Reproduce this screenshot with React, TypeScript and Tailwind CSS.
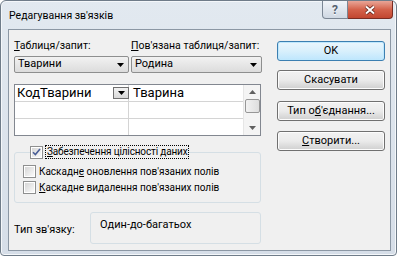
import React from 'react';

const font = "font-['Roboto','Noto_Sans',sans-serif]";

const Check: React.FC<{ checked?: boolean }> = ({ checked }) => (
  <span className="w-[13px] h-[13px] shrink-0 border border-[#8e8f8f] bg-white p-[1px] flex">
    <span className="flex-1 bg-linear-to-br from-[#d6d6d6] to-[#fafafa] flex items-center justify-center">
      {checked && (
        <svg width="9" height="8" viewBox="0 0 9 8">
          <path d="M1 4.2 L3.4 6.6 L8 1" fill="none" stroke="#4a5f97" strokeWidth="1.6" />
        </svg>
      )}
    </span>
  </span>
);

const Button: React.FC<{ children: React.ReactNode; primary?: boolean }> = ({ children, primary }) => (
  <div
    className={
      primary
        ? 'h-[20px] w-[108px] rounded-[3px] border border-[#3c7fb1] bg-linear-to-b from-[#eaf6fd] via-[#d9f0fc] to-[#bee6fd] shadow-[inset_0_0_0_1px_#bfe8fd] flex items-center justify-center text-[11px] text-black whitespace-nowrap'
        : 'h-[20px] w-[108px] rounded-[3px] border border-[#707070] bg-linear-to-b from-[#f2f2f2] via-[#ebebeb] to-[#cfcfcf] shadow-[inset_0_0_0_1px_#fcfcfc] flex items-center justify-center text-[11px] text-black whitespace-nowrap'
    }
  >
    {children}
  </div>
);

const Combo: React.FC<{ text: string; w: string }> = ({ text, w }) => (
  <div
    className={`${w} h-[17px] rounded-[2px] border border-[#8e8f8f] bg-linear-to-b from-[#f2f2f2] to-[#dcdcdc] flex items-center pl-[3px] pr-[4px] text-[11px]`}
  >
    <span className="flex-1">{text}</span>
    <svg width="7" height="4" viewBox="0 0 7 4">
      <path d="M0 0 H7 L3.5 4 Z" fill="#000" />
    </svg>
  </div>
);

export default function App() {
  return (
    <div className={`w-[400px] h-[259px] bg-white ${font} text-black`}>
      <div className="w-[397px] h-[256px] rounded-t-[6px] rounded-b-[4px] border border-[#6f7c89] bg-linear-to-b from-[#e2e9f0] to-[#d6dee8] flex flex-col pl-[7px] pr-[5px] pb-[4px] shadow-[inset_0_0_0_1px_#f4f7fa]">
        <div className="h-[28px] flex items-start justify-between shrink-0">
          <div className="pt-[7px] pl-[1px] text-[10.5px] text-black leading-[15px] whitespace-nowrap">Редагування зв'язків</div>
          <div className="flex mr-[-2px]">
            <div className="w-[26px] h-[18px] border border-t-0 border-[#7b8694] rounded-bl-[4px] bg-linear-to-b from-[#f1f4f8] to-[#cfd8e3] flex items-center justify-center text-[12px] font-bold text-[#566170] leading-none [text-shadow:0_1px_0_#fff]">
              ?
            </div>
            <div className="w-[45px] h-[18px] border border-t-0 border-l-0 border-[#7a2c22] rounded-br-[4px] bg-linear-to-b from-[#e8a597] via-[#d4624b] to-[#c24630] flex items-center justify-center">
              <svg width="12" height="10" viewBox="0 0 12 10">
                <path d="M2 1.5 L10 8.5 M10 1.5 L2 8.5" stroke="#5a2018" strokeWidth="3.6" />
                <path d="M2 1.5 L10 8.5 M10 1.5 L2 8.5" stroke="#fff" strokeWidth="2" />
              </svg>
            </div>
          </div>
        </div>

        <div className="flex-1 border border-[#8b97a4] bg-[#f0f0f0] flex pl-[5px]">
          <div className="w-[248px] flex flex-col">
            <div className="mt-[8px] h-[15px] flex text-[10.5px] leading-[15px] whitespace-nowrap">
              <span className="w-[117px]">
                <u>Т</u>аблиця/запит:
              </span>
              <span>
                <u>П</u>ов'язана таблиця/запит:
              </span>
            </div>
            <div className="mt-[3px] flex gap-[2px]">
              <Combo text="Тварини" w="w-[115px]" />
              <Combo text="Родина" w="w-[131px]" />
            </div>

            <div className="mt-[11px] w-[247px] h-[52px] border border-[#828790] bg-white flex">
              <div className="flex-1 flex flex-col">
                <div className="h-[17px] flex border-b border-[#d4d4d4] text-[13px] leading-[16px]">
                  <div className="w-[114px] border-r border-[#d4d4d4] flex items-center pl-[2px]">
                    <span className="flex-1">КодТварини</span>
                    <span className="w-[16px] h-[12px] mr-[-1px] border border-[#707070] bg-linear-to-b from-[#f2f2f2] to-[#d8d8d8] flex items-center justify-center">
                      <svg width="7" height="4" viewBox="0 0 7 4">
                        <path d="M0 0 H7 L3.5 4 Z" fill="#000" />
                      </svg>
                    </span>
                  </div>
                  <div className="flex-1 pl-[4px]">Тварина</div>
                </div>
                <div className="h-[17px] flex border-b border-[#d4d4d4]">
                  <div className="w-[114px] border-r border-[#d4d4d4]" />
                </div>
                <div className="flex-1 flex">
                  <div className="w-[114px] border-r border-[#d4d4d4]" />
                </div>
              </div>
              <div className="w-[17px] border-l border-[#e6e6e6] bg-[#f4f4f4] flex flex-col items-center">
                <div className="h-[14px] flex items-center justify-center">
                  <svg width="7" height="4" viewBox="0 0 7 4">
                    <path d="M0 4 H7 L3.5 0 Z" fill="#606060" />
                  </svg>
                </div>
                <div className="w-[15px] h-[14px] rounded-[2px] border border-[#979797] bg-linear-to-r from-[#f2f2f2] to-[#dedede]" />
                <div className="flex-1 flex items-end pb-[5px]">
                  <svg width="7" height="4" viewBox="0 0 7 4">
                    <path d="M0 0 H7 L3.5 4 Z" fill="#606060" />
                  </svg>
                </div>
              </div>
            </div>

            <fieldset className="mt-[9px] w-[247px] h-[58px] border border-[#d5dfe5] rounded-[3px] pl-[8px] text-[10px] leading-[15px] whitespace-nowrap">
              <legend className="ml-[7px] px-0 flex items-center gap-[2px]">
                <Check checked />
                <span className="border border-dotted border-black px-[1px] leading-[12px] tracking-[-0.15px]">
                  <u>З</u>абезпечення цілісності даних
                </span>
              </legend>
              <div className="mt-[5px] flex items-center gap-[3px]">
                <Check />
                <span>
                  Каскадн<u>е</u> оновлення пов'язаних полів
                </span>
              </div>
              <div className="mt-[1px] flex items-center gap-[3px]">
                <Check />
                <span>
                  <u>К</u>аскадне видалення пов'язаних полів
                </span>
              </div>
            </fieldset>

            <div className="mt-[9px] flex items-start text-[11px] whitespace-nowrap">
              <span className="w-[76px] mt-[10px] leading-[15px]">Тип зв'язку:</span>
              <div className="w-[171px] h-[32px] border border-[#d5dfe5] rounded-[3px] pl-[9px] pt-[4px] leading-[15px]">
                Один-до-багатьох
              </div>
            </div>
          </div>

          <div className="ml-[15px] flex flex-col pt-[11px]">
            <Button primary>OK</Button>
            <div className="mt-[9px]">
              <Button>Скасувати</Button>
            </div>
            <div className="mt-[11px]">
              <Button>
                Тип о<u>б</u>'єднання...
              </Button>
            </div>
            <div className="mt-[10px]">
              <Button>
                <u>С</u>творити...
              </Button>
            </div>
          </div>
        </div>
      </div>
    </div>
  );
}
